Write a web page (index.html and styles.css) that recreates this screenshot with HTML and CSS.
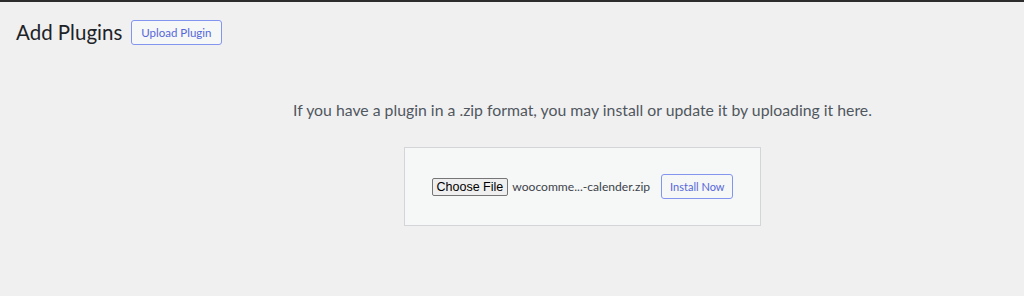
FILE: index.html
```html
<!DOCTYPE html>
<html lang="en">
<head>
    <meta charset="UTF-8">
    <meta name="viewport" content="width=device-width, initial-scale=1.0">
    <title>Add Plugins</title>
    <link rel="stylesheet" href="styles.css">
</head>
<body>
    <div class="topbar"></div>
    <div class="wrap">
        <div class="heading">
            <h1>Add Plugins</h1>
            <button class="page-btn">Upload Plugin</button>
        </div>

        <div class="upload-plugin">
            <p class="install-help">If you have a plugin in a .zip format, you may install or update it by uploading it here.</p>
            <form class="upload-form">
                <span class="file-input">
                    <button type="button" class="choose-btn">Choose File</button>
                    <span class="file-name">woocomme...-calender.zip</span>
                </span>
                <button type="button" class="page-btn install-btn">Install Now</button>
            </form>
        </div>
    </div>
</body>
</html>
```

FILE: styles.css
```css
body {
    margin: 0;
    padding: 0;
    background: #f0f0f1;
    color: #3c434a;
    font-family: Lato, "Noto Sans", sans-serif;
    font-size: 13px;
}
.topbar {
    height: 2px;
    background: #2c2c2c;
}
.wrap {
    padding: 0 16px;
}
.heading {
    display: flex;
    align-items: center;
    gap: 9px;
    padding-top: 16px;
}
h1 {
    margin: 0;
    font-size: 20.5px;
    font-weight: 400;
    color: #1d2327;
    line-height: 28px;
}
.page-btn {
    font-family: Lato, "Noto Sans", sans-serif;
    font-size: 11.5px;
    color: #5567da;
    background: #f6f7f7;
    border: 1px solid #8495f0;
    border-radius: 3px;
    padding: 0 9px;
    height: 25px;
    cursor: pointer;
}
.upload-plugin {
    display: flex;
    flex-direction: column;
    align-items: center;
    padding-left: 141px;
}
.install-help {
    margin: 0;
    padding: 54px 0 27px;
    font-size: 15.8px;
    line-height: 20px;
    color: #50575e;
}
.upload-form {
    display: flex;
    align-items: center;
    justify-content: center;
    width: 355px;
    height: 77px;
    background: #f6f7f7;
    border: 1px solid #d4d5d8;
}
.file-input {
    display: flex;
    align-items: center;
    gap: 4px;
}
.choose-btn {
    font-family: "Liberation Sans", Arial, sans-serif;
    font-size: 12.5px;
    color: #000;
    background: #efefef;
    border: 1px solid #767676;
    border-radius: 2px;
    padding: 0 4px;
    height: 18px;
    line-height: 14px;
}
.file-name {
    font-size: 12.1px;
    color: #3c434a;
}
.install-btn {
    margin-left: 11px;
    padding: 0 8px;
    font-size: 11px;
}
```
